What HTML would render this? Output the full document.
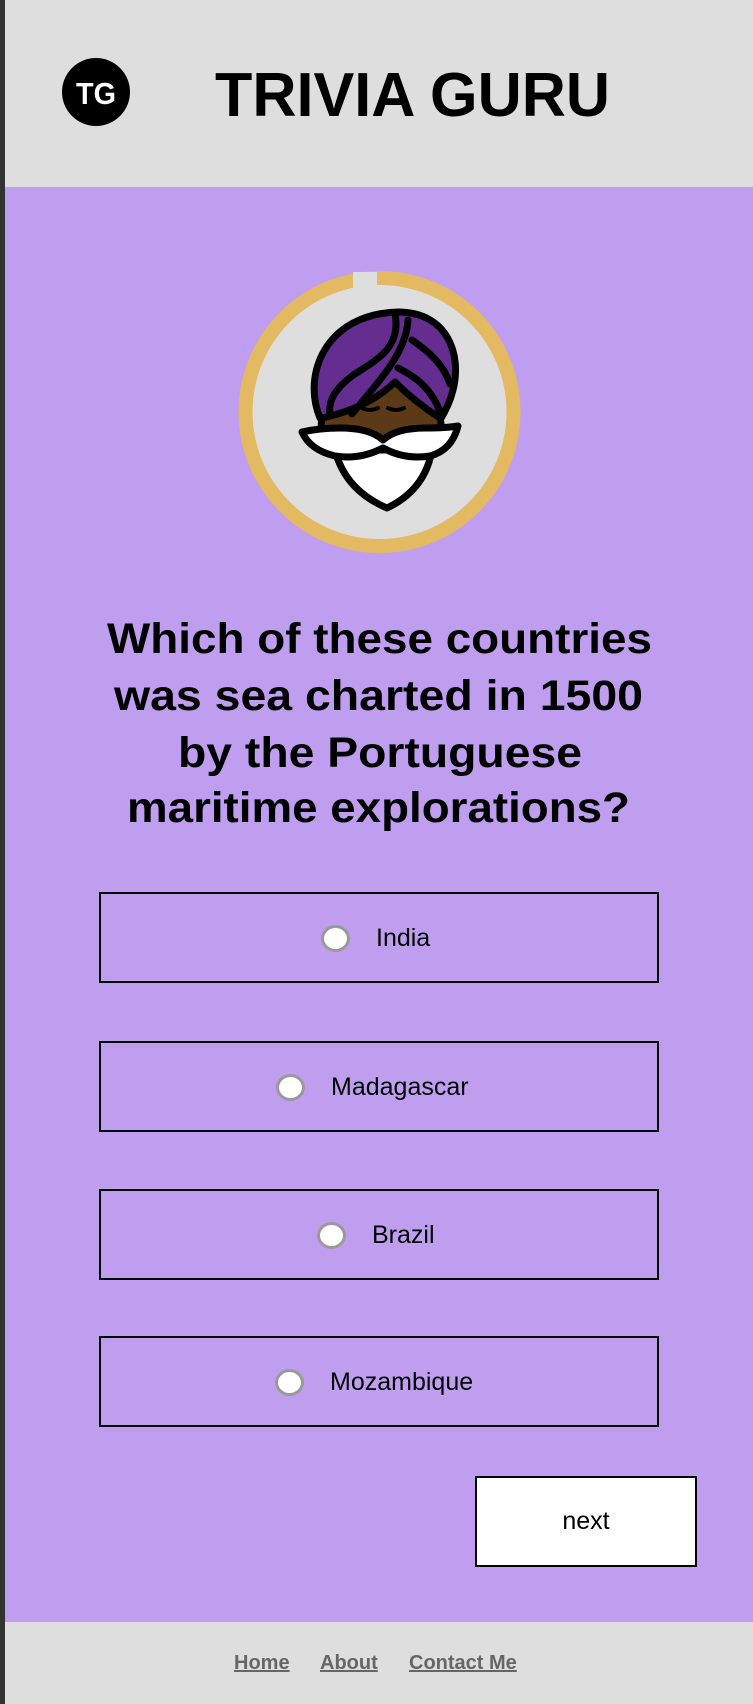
<!DOCTYPE html>
<html><head><meta charset="utf-8"><style>
*{margin:0;padding:0;box-sizing:border-box}
html,body{width:753px;height:1704px;overflow:hidden;background:#bf9ef0;font-family:"Liberation Sans",sans-serif}
.lb{position:absolute;left:0;top:0;width:5px;height:1704px;background:#333}
.hdr{position:absolute;left:5px;top:0;width:748px;height:187px;background:#dedede}
.ftr{position:absolute;left:5px;top:1622px;width:748px;height:82px;background:#dedede}
.opt{position:absolute;left:99px;width:560px;height:91px;border:2px solid #000}
.opt .r{position:absolute;top:31px;width:29px;height:27px;border-radius:50%;background:#fff;border:3px solid #999}
.opt .t{position:absolute;top:28px;font-size:25px;line-height:32px;color:#000}
.next{position:absolute;left:475px;top:1476px;width:222px;height:91px;background:#fff;border:2px solid #000;text-align:center;line-height:87px;font-size:25px}
.lk{position:absolute;top:1652px;font-size:20px;font-weight:bold;color:#666;text-decoration:underline}
</style></head><body>
<div class="lb"></div>
<div class="hdr"></div>
<svg style="position:absolute;left:0;top:0" width="753" height="187">
<ellipse cx="96" cy="92" rx="34" ry="34" fill="#000"/>
<text x="96" y="104" text-anchor="middle" font-family="Liberation Sans" font-weight="bold" font-size="31" fill="#fff" textLength="40" lengthAdjust="spacingAndGlyphs">TG</text>
<text x="215" y="116" font-family="Liberation Sans" font-weight="bold" font-size="62" fill="#000" textLength="395" lengthAdjust="spacingAndGlyphs">TRIVIA GURU</text>
</svg>
<svg style="position:absolute;left:0;top:260" width="753" height="310" viewBox="0 260 753 310">
<circle cx="379.5" cy="412" r="134" fill="#dedede" stroke="#e3b962" stroke-width="14"/>
<rect x="353" y="272" width="24" height="16" fill="#dedede"/>
<g transform="translate(290,300)" stroke="#000" stroke-width="7" stroke-linejoin="round" stroke-linecap="round">
<path d="M30 118 C12 75 35 14 108 12 C158 12 172 55 163 90 C160 102 155 112 150 120 Z" fill="#652d90"/>
<path d="M32 118 Q28 140 45 142 L140 142 Q155 138 150 118 Q125 102 105 82 Q78 108 32 118 Z" fill="#5c3a18"/>
<path d="M105 14 C112 50 82 62 62 76 C46 88 38 100 40 114" fill="none"/>
<path d="M118 20 C116 55 85 85 62 114" fill="none"/>
<path d="M108 68 C128 78 142 90 150 112" fill="none"/>
<path d="M122 40 C142 54 154 66 160 84" fill="none"/>
<path d="M72 108 Q80 112 88 108 M98 108 Q106 112 114 108" fill="none" stroke-width="4"/>
<path d="M45 150 Q55 190 97 208 Q135 190 142 150 Z" fill="#fff"/>
<path d="M12 132 Q30 128 50 128 Q80 128 93 140 Q106 128 136 128 Q156 128 168 126 Q162 150 140 156 Q115 160 93 148 Q70 160 45 156 Q20 150 12 132 Z" fill="#fff"/>
</g>
</svg>
<svg style="position:absolute;left:0;top:600" width="753" height="240" viewBox="0 600 753 240">
<g font-family="Liberation Sans" font-weight="bold" font-size="43" fill="#000">
<text x="107" y="653" textLength="545" lengthAdjust="spacingAndGlyphs">Which of these countries</text>
<text x="114" y="710" textLength="529" lengthAdjust="spacingAndGlyphs">was sea charted in 1500</text>
<text x="178" y="767" textLength="404" lengthAdjust="spacingAndGlyphs">by the Portuguese</text>
<text x="127" y="822" textLength="503" lengthAdjust="spacingAndGlyphs">maritime explorations?</text>
</g></svg>
<div class="opt" style="top:892px"><div class="r" style="left:220px"></div><div class="t" style="left:275px">India</div></div>
<div class="opt" style="top:1041px"><div class="r" style="left:175px"></div><div class="t" style="left:230px">Madagascar</div></div>
<div class="opt" style="top:1189px"><div class="r" style="left:216px"></div><div class="t" style="left:271px">Brazil</div></div>
<div class="opt" style="top:1336px"><div class="r" style="left:174px"></div><div class="t" style="left:229px">Mozambique</div></div>
<div class="next">next</div>
<div class="ftr"></div>
<div class="lk" style="left:234px">Home</div>
<div class="lk" style="left:320px">About</div>
<div class="lk" style="left:409px">Contact Me</div>
</body></html>
